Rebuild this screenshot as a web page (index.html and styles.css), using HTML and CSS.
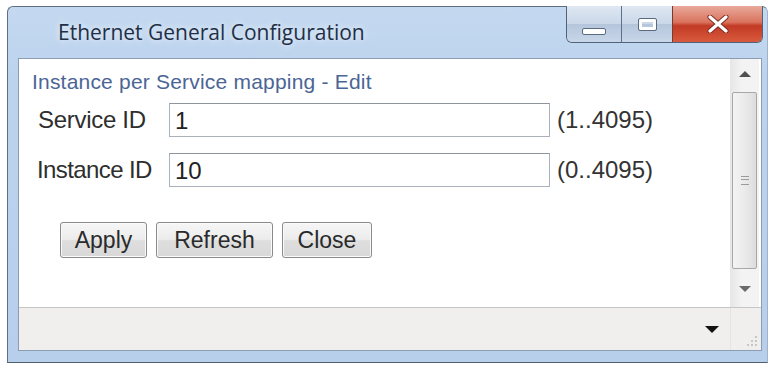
FILE: index.html
```html
<!DOCTYPE html>
<html lang="en">
<head>
    <meta charset="UTF-8">
    <title>Ethernet General Configuration</title>
    <link rel="stylesheet" href="styles.css">
</head>
<body>
    <div class="window">
        <!-- Title bar -->
        <div class="titlebar">
            <span class="title">Ethernet General Configuration</span>
            <div class="caption-buttons">
                <div class="cap-btn cap-min"><span class="min-glyph"></span></div>
                <div class="cap-btn cap-max"><span class="max-glyph"></span></div>
                <div class="cap-btn cap-close">
                    <svg width="22" height="18" viewBox="0 0 22 18">
                        <path d="M3 2 L19 16 M19 2 L3 16" stroke="#7a2a22" stroke-width="5" stroke-linecap="round"/>
                        <path d="M3 2 L19 16 M19 2 L3 16" stroke="#ffffff" stroke-width="3.2" stroke-linecap="round"/>
                    </svg>
                </div>
            </div>
        </div>

        <div class="panel">
            <div class="content-area">
                <div class="content">
                    <div class="section-title">Instance per Service mapping - Edit</div>
                    <div class="fields">
                        <label class="field-label">Service ID</label>
                        <div class="text-box">1</div>
                        <span class="range">(1..4095)</span>

                        <label class="field-label instance">Instance ID</label>
                        <div class="text-box">10</div>
                        <span class="range">(0..4095)</span>
                    </div>
                    <div class="actions">
                        <button class="btn btn-apply">Apply</button>
                        <button class="btn btn-refresh">Refresh</button>
                        <button class="btn btn-close">Close</button>
                    </div>
                </div>

                <!-- Scrollbar -->
                <div class="scrollbar">
                    <div class="arrow arrow-up"></div>
                    <div class="thumb">
                        <div class="grip"></div>
                    </div>
                    <div class="arrow arrow-down"></div>
                </div>
            </div>

            <div class="statusbar">
                <span class="status-drop"></span>
                <div class="resize-grip">
                    <svg width="12" height="12" viewBox="0 0 12 12">
                        <g fill="#c6c6c6">
                            <rect x="9" y="1" width="2" height="2"/>
                            <rect x="5" y="5" width="2" height="2"/>
                            <rect x="9" y="5" width="2" height="2"/>
                            <rect x="1" y="9" width="2" height="2"/>
                            <rect x="5" y="9" width="2" height="2"/>
                            <rect x="9" y="9" width="2" height="2"/>
                        </g>
                    </svg>
                </div>
            </div>
        </div>
    </div>
</body>
</html>
```

FILE: styles.css
```css
body {
    margin: 0;
    padding: 0;
    background-color: white;
    font-family: "Liberation Sans", Arial, sans-serif;
}

/* Window frame */
.window {
    margin: 6px 3px 0 7px;
    width: 761px;
    height: 357px;
    box-sizing: border-box;
    border: 1px solid #5f6f80;
    border-right-color: #9fb4cc;
    border-bottom-color: #4f5f70;
    border-radius: 6px 6px 0 0;
    background: linear-gradient(to bottom, #c4d9f0 0%, #bcd3ee 20%, #b7cfeb 100%);
    padding: 0 5px 11px 10px;
    display: flex;
    flex-direction: column;
}

.titlebar {
    height: 51px;
    display: flex;
    justify-content: space-between;
    align-items: flex-start;
}

.title {
    font-family: "Open Sans", "Noto Sans", sans-serif;
    font-size: 21px;
    color: #1f2f45;
    margin-left: 40px;
    margin-top: 11px;
    text-shadow: 0 0 6px rgba(255, 255, 255, 0.9);
}

.caption-buttons {
    display: flex;
    margin-top: -1px;
    margin-right: -1px;
    height: 36px;
    border: 1px solid #50637a;
    border-top: none;
    border-radius: 0 0 6px 6px;
    overflow: hidden;
}

.cap-btn {
    display: flex;
    justify-content: center;
    align-items: center;
    box-sizing: border-box;
}

.cap-min {
    width: 55px;
    background: linear-gradient(to bottom, #dfe8f3 0%, #c9d7e8 50%, #b5c6dc 51%, #c8d6e8 100%);
    border-right: 1px solid #5d708a;
}

.cap-max {
    width: 51px;
    background: linear-gradient(to bottom, #dfe8f3 0%, #c9d7e8 50%, #b5c6dc 51%, #c8d6e8 100%);
    border-right: 1px solid #7a3a30;
}

.cap-close {
    width: 89px;
    background: linear-gradient(to bottom, #e9a99a 0%, #d9735e 45%, #c23a24 55%, #d85a3e 100%);
}

.min-glyph {
    width: 22px;
    height: 5px;
    margin-top: 14px;
    background-color: #ffffff;
    border: 1px solid #5a6b80;
    border-radius: 2px;
}

.max-glyph {
    width: 17px;
    height: 11px;
    box-sizing: border-box;
    border: 3px solid #ffffff;
    outline: 1px solid #5a6b80;
    border-radius: 1px;
}

/* Client panel */
.panel {
    flex: 1;
    display: flex;
    flex-direction: column;
    background-color: white;
    border: 1px solid #8c9db3;
}

.content-area {
    flex: 1;
    display: flex;
}

.content {
    flex: 1;
    padding: 11px 0 0 13px;
}

.section-title {
    font-size: 21px;
    color: #4b6596;
    letter-spacing: 0.2px;
}

.fields {
    display: grid;
    grid-template-columns: 130px 381px auto;
    row-gap: 16px;
    column-gap: 7px;
    align-items: center;
    margin-top: 9px;
}

.field-label {
    font-size: 24px;
    color: #2e2e2e;
    margin-left: 6px;
    letter-spacing: -0.3px;
}

.field-label.instance {
    margin-left: 5px;
    letter-spacing: -0.6px;
}

.text-box {
    grid-column: 2;
    height: 34px;
    box-sizing: border-box;
    border: 1px solid #a9b1bb;
    border-top-color: #8c949e;
    padding: 3px 5px;
    font-size: 24px;
    color: #222;
    line-height: 27px;
}

.range {
    font-size: 24px;
    color: #333;
}

.actions {
    display: flex;
    gap: 9px;
    margin-top: 35px;
    margin-left: 28px;
}

.btn {
    height: 36px;
    box-sizing: border-box;
    border: 1px solid #8a8a8a;
    border-radius: 3px;
    background: linear-gradient(to bottom, #f6f6f6 0%, #ececec 48%, #dedede 52%, #d8d8d8 100%);
    font-family: "Liberation Sans", Arial, sans-serif;
    font-size: 23px;
    color: #2a2a2a;
    padding: 0;
    box-shadow: inset 0 0 0 1px #fafafa;
}

.btn-apply {
    width: 87px;
}

.btn-refresh {
    width: 117px;
}

.btn-close {
    width: 90px;
}

/* Scrollbar */
.scrollbar {
    width: 29px;
    margin-right: 2px;
    background: linear-gradient(to right, #e6e6e6, #f3f3f3 40%, #f3f3f3);
    display: flex;
    flex-direction: column;
    align-items: center;
}

.arrow {
    height: 0;
    width: 0;
    border-left: 6px solid transparent;
    border-right: 6px solid transparent;
}

.arrow-up {
    border-bottom: 6px solid #505050;
    margin-top: 12px;
    margin-bottom: 15px;
}

.arrow-down {
    border-top: 6px solid #6a6a6a;
    margin-top: 17px;
}

.thumb {
    width: 25px;
    height: 177px;
    box-sizing: border-box;
    border: 1px solid #a8a8a8;
    border-radius: 2px;
    background: linear-gradient(to right, #f4f4f4, #e8e8e8 60%, #dcdcdc);
    display: flex;
    justify-content: center;
    align-items: center;
}

.grip {
    width: 8px;
    height: 7px;
    border-top: 1px solid #9a9a9a;
    border-bottom: 1px solid #9a9a9a;
    background: linear-gradient(to bottom, transparent 2px, #9a9a9a 2px, #9a9a9a 3px, transparent 3px);
}

/* Status bar */
.statusbar {
    height: 42px;
    border-top: 1px solid #c6c6c6;
    background-color: #f1efed;
    display: flex;
    align-items: center;
    justify-content: flex-end;
}

.status-drop {
    width: 0;
    height: 0;
    border-left: 7px solid transparent;
    border-right: 7px solid transparent;
    border-top: 7px solid #111;
    margin-right: 11px;
}

.resize-grip {
    width: 31px;
    height: 100%;
    display: flex;
    align-items: flex-end;
    justify-content: flex-end;
    padding: 0 3px 3px 0;
    box-sizing: border-box;
    border-left: 1px solid #e6e4e2;
}
```
